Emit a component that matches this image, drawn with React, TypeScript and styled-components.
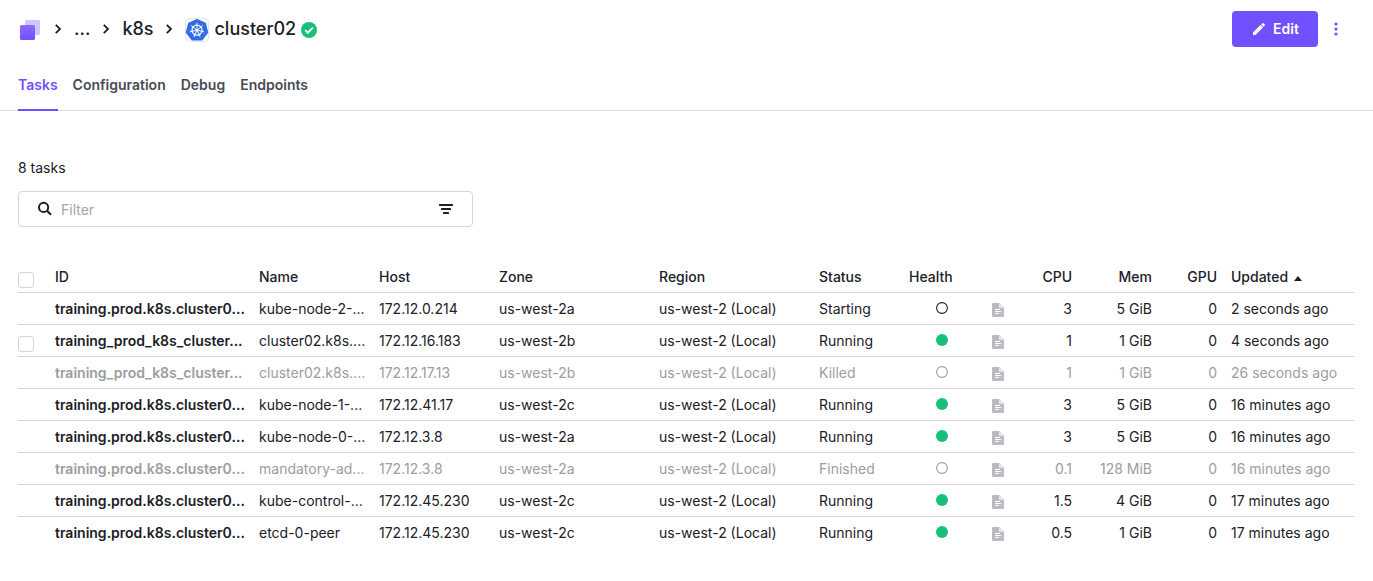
import React from "react";
import styled, { createGlobalStyle, css } from "styled-components";

const color = {
  text: "#1b2029",
  tab: "#474b54",
  muted: "#9b9da1",
  border: "#d4d5dd",
  line: "#dadbdd",
  purple: "#7150ff",
  green: "#17bf7b",
};

const GlobalStyle = createGlobalStyle`
  * { box-sizing: border-box; }
  body {
    margin: 0;
    background: #fff;
    color: ${color.text};
    font-family: Inter, "Liberation Sans", sans-serif;
    font-size: 14px;
    line-height: 20px;
  }
  svg { display: block; }
`;

const Header = styled.header`
  display: flex;
  align-items: center;
  justify-content: space-between;
  height: 58px;
  padding: 0 29px 0 18px;
`;

const Breadcrumbs = styled.ol`
  display: flex;
  align-items: center;
  gap: 12px;
  margin: 0;
  padding: 0;
  list-style: none;
  font-size: 18px;
  font-weight: 500;
  line-height: 24px;
`;

const Crumb = styled.li`
  display: flex;
  align-items: center;
  gap: 5px;
`;

const CrumbLink = styled.a`
  color: inherit;
  text-decoration: none;
`;

const Actions = styled.div`
  display: flex;
  align-items: center;
  gap: 10px;
`;

const EditButton = styled.button`
  display: flex;
  align-items: center;
  justify-content: center;
  gap: 6px;
  width: 86px;
  height: 36px;
  padding: 0;
  border: 0;
  border-radius: 4px;
  background: ${color.purple};
  color: #fff;
  font: inherit;
  font-weight: 600;
`;

const IconButton = styled.button`
  display: flex;
  align-items: center;
  justify-content: center;
  width: 16px;
  height: 24px;
  padding: 0;
  border: 0;
  background: none;
  color: inherit;
`;

const Tabs = styled.nav`
  display: flex;
  gap: 15px;
  height: 53px;
  padding: 0 18px;
  border-bottom: 1px solid ${color.line};
`;

const Tab = styled.a<{ $active?: boolean }>`
  height: 53px;
  padding-top: 17px;
  border-bottom: 2px solid ${(p) => (p.$active ? color.purple : "transparent")};
  color: ${(p) => (p.$active ? color.purple : color.tab)};
  font-weight: 600;
  text-decoration: none;
`;

const Content = styled.main`
  padding: 47px 19px 24px 18px;
`;

const Count = styled.p`
  margin: 0 0 13px;
`;

const FilterBox = styled.div`
  display: flex;
  align-items: center;
  gap: 8px;
  width: 455px;
  max-width: 100%;
  height: 36px;
  margin-bottom: 34px;
  padding: 0 18px;
  border: 1px solid ${color.border};
  border-radius: 4px;
`;

const FilterInput = styled.input`
  flex: 1;
  min-width: 0;
  padding: 2px 0 0;
  border: 0;
  outline: 0;
  background: none;
  color: inherit;
  font: inherit;
  &::placeholder {
    color: #a3a5a9;
    opacity: 1;
  }
`;

const Table = styled.table`
  width: 100%;
  border-collapse: separate;
  border-spacing: 0;
  table-layout: fixed;
`;

const Col = styled.col<{ $width?: number }>`
  ${(p) => p.$width && css`width: ${p.$width}px;`}
`;

const Row = styled.tr<{ $muted?: boolean }>`
  color: ${(p) => (p.$muted ? color.muted : color.text)};
`;

const cell = css<{ $align?: "right" | "center" }>`
  height: 32px;
  padding: 0 8px;
  border-bottom: 1px solid ${color.border};
  overflow: hidden;
  text-align: ${(p) => p.$align ?? "left"};
  white-space: nowrap;
`;

const HeadCell = styled.th<{ $align?: "right" | "center" }>`
  ${cell}
  font-weight: 500;
`;

const Cell = styled.td<{ $align?: "right" | "center" }>`
  ${cell}
  tr:last-child > & {
    border-bottom-color: transparent;
  }
`;

const CheckHead = styled(HeadCell)`
  padding: 6px 0 0;
`;

const CheckCell = styled(Cell)`
  padding: 6px 0 0;
`;

const GlyphCell = styled(Cell)`
  padding: 0;
  svg {
    margin: 0 auto;
  }
`;

const TaskId = styled.a`
  color: inherit;
  font-weight: 600;
  text-decoration: none;
`;

const Checkbox = styled.input`
  display: block;
  appearance: none;
  width: 16px;
  height: 16px;
  margin: 0;
  border: 1px solid ${color.border};
  border-radius: 3px;
  background: #fff;
`;

const SortButton = styled.button`
  display: flex;
  align-items: center;
  gap: 6px;
  padding: 0;
  border: 0;
  background: none;
  color: inherit;
  font: inherit;

  svg {
    margin-top: 3px;
  }
`;

const ServicesIcon = () => (
  <svg width="24" height="24" viewBox="0 0 24 24" aria-hidden="true">
    <defs>
      <linearGradient id="front" x1="0" y1="0" x2="0" y2="1">
        <stop offset="0" stopColor="#8c6bff" />
        <stop offset="1" stopColor="#7150ff" />
      </linearGradient>
    </defs>
    <rect x="7" y="3" width="15" height="15" rx="1.5" fill="#d0c5ff" />
    <rect x="2" y="8" width="15" height="15" rx="1.5" fill="url(#front)" />
  </svg>
);

const Chevron = () => (
  <svg width="8" height="12" viewBox="0 0 8 12" aria-hidden="true">
    <path d="M1.8 1.8 6 6 1.8 10.2" fill="none" stroke={color.text} strokeWidth="1.8" />
  </svg>
);

const spokes = [0, 1, 2, 3, 4, 5, 6].map((n) => (n * 360) / 7);

const KubernetesIcon = () => (
  <svg width="24" height="26" viewBox="0 -2 24 26" aria-hidden="true">
    <rect x="0.5" y="0.5" width="23" height="23" rx="4" fill="#fff" stroke="#e3e4e8" />
    <path
      d="M12 1.8 20.2 5.6 22.3 14.4 16.7 21.6H7.3L1.7 14.4 3.8 5.6Z"
      fill="#326de6"
      stroke="#326de6"
      strokeWidth="1.8"
      strokeLinejoin="round"
    />
    <g fill="none" stroke="#fff" strokeLinecap="round">
      <circle cx="12" cy="12.2" r="5" strokeWidth="1.2" />
      {spokes.map((angle) => (
        <path key={angle} d="M12 10.8V5.2" strokeWidth="0.9" transform={`rotate(${angle} 12 12.2)`} />
      ))}
    </g>
    <circle cx="12" cy="12.2" r="1.4" fill="#fff" />
  </svg>
);

const HealthyIcon = () => (
  <svg width="16" height="18" viewBox="0 -2 16 18" role="img" aria-label="Healthy">
    <circle cx="8" cy="8" r="8" fill={color.green} />
    <path d="m4.2 8.2 2.6 2.5 5-5" fill="none" stroke="#fff" strokeWidth="1.8" />
  </svg>
);

const PencilIcon = () => (
  <svg width="16" height="16" viewBox="0 0 16 16" fill="#fff" aria-hidden="true">
    <path d="M2 11.5 9.4 4.1l2.5 2.5L4.5 14H2ZM10.1 3.4l1.3-1.2a.7.7 0 0 1 1 0l1.4 1.4a.7.7 0 0 1 0 1L12.6 5.9Z" />
  </svg>
);

const MoreIcon = () => (
  <svg width="4" height="14" viewBox="0 0 4 14" fill={color.purple} aria-hidden="true">
    <circle cx="2" cy="2" r="1.6" />
    <circle cx="2" cy="7" r="1.6" />
    <circle cx="2" cy="12" r="1.6" />
  </svg>
);

const SearchIcon = () => (
  <svg width="16" height="16" viewBox="0 0 16 16" fill="none" stroke={color.text} aria-hidden="true">
    <circle cx="6.6" cy="6.4" r="4.6" strokeWidth="2" />
    <path d="m10 9.8 4 4" strokeWidth="2.2" />
  </svg>
);

const FilterIcon = () => (
  <svg width="14" height="10" viewBox="0 0 14 10" fill={color.text} aria-hidden="true">
    <rect width="14" height="2" rx="0.6" />
    <rect x="2" y="4" width="10" height="2" rx="0.6" />
    <rect x="4" y="8" width="6" height="2" rx="0.6" />
  </svg>
);

const SortArrow = () => (
  <svg width="8" height="5" viewBox="0 0 8 5" aria-hidden="true">
    <path d="M4 0 8 5H0Z" fill={color.text} />
  </svg>
);

const HealthDot = ({ healthy }: { healthy: boolean }) => (
  <svg width="12" height="14" viewBox="0 0 12 14" role="img" aria-label={healthy ? "Healthy" : "Unknown"}>
    {healthy ? (
      <circle cx="6" cy="6" r="6" fill={color.green} />
    ) : (
      <circle cx="6" cy="6" r="5.4" fill="none" stroke="currentColor" strokeWidth="1.1" />
    )}
  </svg>
);

const LogIcon = () => (
  <svg width="12" height="16" viewBox="0 -2 12 16" aria-hidden="true">
    <path d="M0 .8Q0 0 .8 0H7l5 5v8.2q0 .8-.8.8H.8Q0 14 0 13.2Z" fill="#babcc3" />
    <path d="M7 0 12 5H7Z" fill="#e4e5e8" />
    <path d="M3 6.5h5M3 8.5h6M3 10.5h4" stroke="#fff" />
  </svg>
);

interface Task {
  id: string;
  name: string;
  host: string;
  zone: string;
  status: string;
  cpu: string;
  mem: string;
  updated: string;
  selectable?: boolean;
}

const tasks: Task[] = [
  { id: "training.prod.k8s.cluster0...", name: "kube-node-2-...", host: "172.12.0.214", zone: "us-west-2a", status: "Starting", cpu: "3", mem: "5 GiB", updated: "2 seconds ago" },
  { id: "training_prod_k8s_cluster...", name: "cluster02.k8s....", host: "172.12.16.183", zone: "us-west-2b", status: "Running", cpu: "1", mem: "1 GiB", updated: "4 seconds ago", selectable: true },
  { id: "training_prod_k8s_cluster...", name: "cluster02.k8s....", host: "172.12.17.13", zone: "us-west-2b", status: "Killed", cpu: "1", mem: "1 GiB", updated: "26 seconds ago" },
  { id: "training.prod.k8s.cluster0...", name: "kube-node-1-...", host: "172.12.41.17", zone: "us-west-2c", status: "Running", cpu: "3", mem: "5 GiB", updated: "16 minutes ago" },
  { id: "training.prod.k8s.cluster0...", name: "kube-node-0-...", host: "172.12.3.8", zone: "us-west-2a", status: "Running", cpu: "3", mem: "5 GiB", updated: "16 minutes ago" },
  { id: "training.prod.k8s.cluster0...", name: "mandatory-ad...", host: "172.12.3.8", zone: "us-west-2a", status: "Finished", cpu: "0.1", mem: "128 MiB", updated: "16 minutes ago" },
  { id: "training.prod.k8s.cluster0...", name: "kube-control-...", host: "172.12.45.230", zone: "us-west-2c", status: "Running", cpu: "1.5", mem: "4 GiB", updated: "17 minutes ago" },
  { id: "training.prod.k8s.cluster0...", name: "etcd-0-peer", host: "172.12.45.230", zone: "us-west-2c", status: "Running", cpu: "0.5", mem: "1 GiB", updated: "17 minutes ago" },
];

const UpdatedHead = styled(HeadCell)`
  padding: 0 6px;
`;

const UpdatedCell = styled(Cell)`
  padding: 0 6px;
`;

const columnWidths = [29, 204, 120, 120, 160, 160, 90, 82, 30, 67, 80, 65];

export default function App() {
  return (
    <>
      <GlobalStyle />
      <Header>
        <Breadcrumbs>
          <Crumb>
            <CrumbLink href="#services" aria-label="Services"><ServicesIcon /></CrumbLink>
          </Crumb>
          <Crumb><Chevron /></Crumb>
          <Crumb><CrumbLink href="#parents">...</CrumbLink></Crumb>
          <Crumb><Chevron /></Crumb>
          <Crumb><CrumbLink href="#k8s">k8s</CrumbLink></Crumb>
          <Crumb><Chevron /></Crumb>
          <Crumb>
            <KubernetesIcon />
            <CrumbLink href="#cluster02">cluster02</CrumbLink>
            <HealthyIcon />
          </Crumb>
        </Breadcrumbs>
        <Actions>
          <EditButton type="button"><PencilIcon />Edit</EditButton>
          <IconButton type="button" aria-label="More actions"><MoreIcon /></IconButton>
        </Actions>
      </Header>
      <Tabs>
        <Tab href="#tasks" $active aria-current="page">Tasks</Tab>
        <Tab href="#configuration">Configuration</Tab>
        <Tab href="#debug">Debug</Tab>
        <Tab href="#endpoints">Endpoints</Tab>
      </Tabs>
      <Content>
        <Count>8 tasks</Count>
        <FilterBox>
          <SearchIcon />
          <FilterInput type="text" placeholder="Filter" aria-label="Filter tasks" />
          <IconButton type="button" aria-label="Filter options"><FilterIcon /></IconButton>
        </FilterBox>
        <Table>
          <colgroup>
            {columnWidths.map((width, i) => <Col key={i} $width={width} />)}
            <Col />
          </colgroup>
          <thead>
            <Row>
              <CheckHead><Checkbox type="checkbox" aria-label="Select all tasks" /></CheckHead>
              <HeadCell>ID</HeadCell>
              <HeadCell>Name</HeadCell>
              <HeadCell>Host</HeadCell>
              <HeadCell>Zone</HeadCell>
              <HeadCell>Region</HeadCell>
              <HeadCell>Status</HeadCell>
              <HeadCell>Health</HeadCell>
              <HeadCell aria-label="Logs" />
              <HeadCell $align="right">CPU</HeadCell>
              <HeadCell $align="right">Mem</HeadCell>
              <HeadCell $align="right">GPU</HeadCell>
              <UpdatedHead aria-sort="ascending">
                <SortButton type="button">Updated<SortArrow /></SortButton>
              </UpdatedHead>
            </Row>
          </thead>
          <tbody>
            {tasks.map((task, i) => (
              <Row key={i} $muted={task.status === "Killed" || task.status === "Finished"}>
                <CheckCell>
                  {task.selectable && <Checkbox type="checkbox" aria-label={`Select ${task.id}`} />}
                </CheckCell>
                <Cell><TaskId href="#task">{task.id}</TaskId></Cell>
                <Cell>{task.name}</Cell>
                <Cell>{task.host}</Cell>
                <Cell>{task.zone}</Cell>
                <Cell>us-west-2 (Local)</Cell>
                <Cell>{task.status}</Cell>
                <GlyphCell><HealthDot healthy={task.status === "Running"} /></GlyphCell>
                <GlyphCell><LogIcon /></GlyphCell>
                <Cell $align="right">{task.cpu}</Cell>
                <Cell $align="right">{task.mem}</Cell>
                <Cell $align="right">0</Cell>
                <UpdatedCell>{task.updated}</UpdatedCell>
              </Row>
            ))}
          </tbody>
        </Table>
      </Content>
    </>
  );
}
